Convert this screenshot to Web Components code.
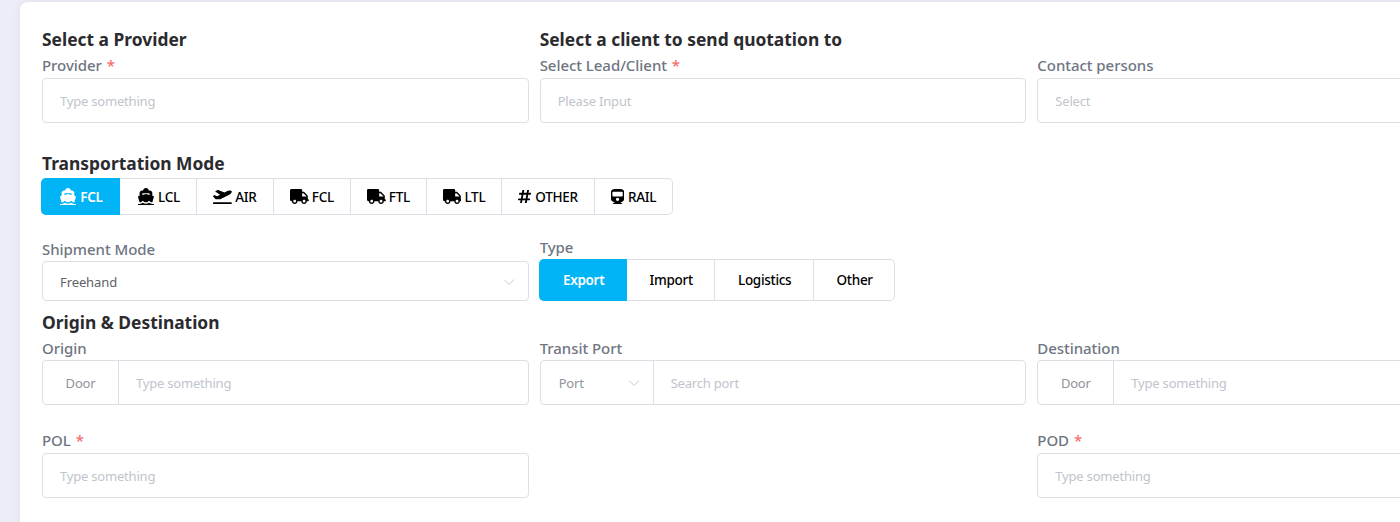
<!DOCTYPE html>
<html lang="en">
<head>
<meta charset="utf-8">
<title>Quotation</title>
<style>
  html, body { margin: 0; height: 522px; overflow: hidden; background: #ecedf6; }
  body { font-family: "Noto Sans", "Open Sans", sans-serif; }
</style>
</head>
<body>
<quote-card>
  <form-row>
    <form-section title="Select a Provider">
      <form-field label="Provider" required><text-box placeholder="Type something"></text-box></form-field>
    </form-section>
    <form-section title="Select a client to send quotation to">
      <form-field label="Select Lead/Client" required><text-box placeholder="Please Input"></text-box></form-field>
    </form-section>
    <form-section title="&nbsp;">
      <form-field label="Contact persons"><text-box placeholder="Select"></text-box></form-field>
    </form-section>
  </form-row>

  <form-section title="Transportation Mode" class="modes">
    <seg-group>
      <seg-button active width="79"><mode-icon name="ship"></mode-icon>FCL</seg-button>
      <seg-button width="77"><mode-icon name="ship"></mode-icon>LCL</seg-button>
      <seg-button width="77"><mode-icon name="plane"></mode-icon>AIR</seg-button>
      <seg-button width="77"><mode-icon name="truck"></mode-icon>FCL</seg-button>
      <seg-button width="76"><mode-icon name="truck"></mode-icon>FTL</seg-button>
      <seg-button width="75"><mode-icon name="truck"></mode-icon>LTL</seg-button>
      <seg-button width="93"><mode-icon name="hash"></mode-icon>OTHER</seg-button>
      <seg-button width="77"><mode-icon name="train"></mode-icon>RAIL</seg-button>
    </seg-group>
  </form-section>

  <form-row class="ship-row">
    <form-field label="Shipment Mode"><select-box value="Freehand"></select-box></form-field>
    <form-field label="Type">
      <seg-group tall>
        <seg-button active width="88">Export</seg-button>
        <seg-button width="88">Import</seg-button>
        <seg-button width="99">Logistics</seg-button>
        <seg-button width="80">Other</seg-button>
      </seg-group>
    </form-field>
  </form-row>

  <form-section title="Origin &amp; Destination" class="route">
    <form-row>
      <form-field label="Origin"><addon-box addon="Door" placeholder="Type something"></addon-box></form-field>
      <form-field label="Transit Port"><addon-box addon="Port" select placeholder="Search port"></addon-box></form-field>
      <form-field label="Destination"><addon-box addon="Door" placeholder="Type something"></addon-box></form-field>
    </form-row>
    <form-row class="ports">
      <form-field label="POL" required><text-box placeholder="Type something"></text-box></form-field>
      <div></div>
      <form-field label="POD" required><text-box placeholder="Type something"></text-box></form-field>
    </form-row>
  </form-section>
</quote-card>

<script>
const chevron = `<svg width="12" height="12" viewBox="0 0 12 12" fill="none" stroke="#c5c8ce" stroke-width="1"><path d="M1 3.5l5 5 5-5"/></svg>`;

const ICONS = {
  ship: ['2 1 20 22', 'M7.5,7.5H16.5V9.9L12,8.4L7.5,9.9ZM3.94,19H4C5.6,19 7,18.12 8,17C9,18.12 10.4,19 12,19C13.6,19 15,18.12 16,17C17,18.12 18.4,19 20,19H20.05L21.95,12.31C22.03,12.06 22,11.78 21.89,11.54C21.76,11.3 21.55,11.12 21.29,11.04L20,10.62V7C20,5.2 18.5,4 17,4H15.5C15.5,2.2 14,1 12,1C10,1 8.5,2.2 8.5,4H7C5.5,4 4,5.2 4,7V10.62L2.71,11.04C2.45,11.12 2.24,11.3 2.11,11.54C2,11.78 1.97,12.06 2.05,12.31M20,21C18.61,21 17.22,20.53 16,19.67C13.56,21.38 10.44,21.38 8,19.67C6.78,20.53 5.39,21 4,21H2V23H4C5.37,23 6.74,22.65 8,22.01C10.5,23.3 13.5,23.3 16,22.01C17.26,22.65 18.62,23 20,23H22V21H20Z', 17.5],
  plane: ['0 0 640 512', 'M624 448H16c-8.84 0-16 7.16-16 16v32c0 8.84 7.16 16 16 16h608c8.84 0 16-7.16 16-16v-32c0-8.84-7.16-16-16-16zM80.55 341.27c6.28 6.84 15.1 10.72 24.33 10.71l130.54-.18a65.62 65.62 0 0 0 29.64-7.12l290.96-147.65c26.74-13.57 50.71-32.94 67.02-58.31 18.31-28.48 20.3-49.09 13.07-63.65-7.21-14.57-24.74-25.27-58.25-27.45-29.85-1.94-59.54 5.92-86.28 19.48l-98.51 49.99-218.7-82.06a17.799 17.799 0 0 0-18-1.11L90.62 67.29c-10.67 5.41-13.25 19.65-5.17 28.53l156.22 98.1-103.21 52.38-72.35-36.47a17.804 17.804 0 0 0-16.07.02L9.91 230.22c-10.44 5.3-13.19 19.12-5.57 28.08l76.21 82.97z', 15],
  truck: ['0 0 640 512', 'M624 352h-16V243.9c0-12.7-5.1-24.9-14.1-33.9L494 110.1c-9-9-21.2-14.1-33.9-14.1H416V48c0-26.5-21.5-48-48-48H48C21.5 0 0 21.5 0 48v320c0 26.5 21.5 48 48 48h16c0 53 43 96 96 96s96-43 96-96h128c0 53 43 96 96 96s96-43 96-96h48c8.8 0 16-7.2 16-16v-32c0-8.8-7.2-16-16-16zM160 464c-26.5 0-48-21.5-48-48s21.5-48 48-48 48 21.5 48 48-21.5 48-48 48zm320 0c-26.5 0-48-21.5-48-48s21.5-48 48-48 48 21.5 48 48-21.5 48-48 48zm80-208H416V144h44.1l99.9 99.9V256z', 15],
  hash: ['0 0 448 512', 'M440.667 182.109l7.143-40c1.313-7.355-4.342-14.109-11.813-14.109h-74.81l14.623-81.891C377.123 38.754 371.468 32 363.997 32h-40.632a12 12 0 0 0-11.813 9.891L296.175 128H197.54l14.623-81.891C213.477 38.754 207.822 32 200.35 32h-40.632a12 12 0 0 0-11.813 9.891L132.528 128H53.432a12 12 0 0 0-11.813 9.891l-7.143 40C33.163 185.246 38.818 192 46.289 192h74.81L98.242 320H19.146a12 12 0 0 0-11.813 9.891l-7.143 40C-1.123 377.246 4.532 384 12.003 384h74.81L72.19 465.891C70.877 473.246 76.532 480 84.003 480h40.632a12 12 0 0 0 11.813-9.891L151.826 384h98.634l-14.623 81.891C234.523 473.246 240.178 480 247.65 480h40.632a12 12 0 0 0 11.813-9.891L315.472 384h79.096a12 12 0 0 0 11.813-9.891l7.143-40c1.313-7.355-4.342-14.109-11.813-14.109h-74.81l22.857-128h79.096a12 12 0 0 0 11.813-9.891zM261.889 320h-98.634l22.857-128h98.634l-22.857 128z', 15],
  train: ['0 0 448 512', 'M448 96v256c0 51.815-61.624 96-130.022 96l62.98 49.721C386.905 502.417 383.562 512 376 512H72c-7.578 0-10.892-9.594-4.957-14.279L130.022 448C61.82 448 0 403.954 0 352V96C0 42.981 64 0 128 0h192c65 0 128 42.981 128 96zm-48 136V120c0-13.255-10.745-24-24-24H72c-13.255 0-24 10.745-24 24v112c0 13.255 10.745 24 24 24h304c13.255 0 24-10.745 24-24zm-176 64c-30.928 0-56 25.072-56 56s25.072 56 56 56 56-25.072 56-56-25.072-56-56-56z', 15]
};

class quoteCard extends HTMLElement {
  constructor() {
    super();
    this.attachShadow({ mode: 'open' });
    this.shadowRoot.innerHTML = `
      <style>
        :host {
          display: block;
          box-sizing: border-box;
          width: 1560px;
          height: 560px;
          margin: 2px 0 0 20px;
          padding: 26px 22px 0;
          background: #fff;
          border-radius: 8px;
          box-shadow: 0 0 8px rgba(120, 120, 160, .12);
        }
      </style>
      <slot></slot>
    `;
  }
}

class formRow extends HTMLElement {
  constructor() {
    super();
    this.attachShadow({ mode: 'open' });
    this.shadowRoot.innerHTML = `
      <style>
        :host {
          display: grid;
          grid-template-columns: repeat(3, 486.67px);
          column-gap: 11px;
        }
        :host(.ship-row) { margin-top: 21px; align-items: end; --label-gap: 1px; }
        :host(.ports) { margin-top: 24px; --label-gap: 2px; }
      </style>
      <slot></slot>
    `;
  }
}

class formSection extends HTMLElement {
  constructor() {
    super();
    this.attachShadow({ mode: 'open' });
    this.shadowRoot.innerHTML = `
      <style>
        :host { display: block; }
        :host(.modes) { margin-top: 29px; }
        :host(.route) { margin-top: 10px; --label-gap: 1px; }
        h3 {
          margin: 0 0 4px;
          font-size: 17.4px;
          line-height: 22px;
          font-weight: 700;
          color: #2b2b2f;
        }
      </style>
      <h3></h3>
      <slot></slot>
    `;
    this.shadowRoot.querySelector('h3').textContent = this.getAttribute('title');
  }
}

class formField extends HTMLElement {
  constructor() {
    super();
    this.attachShadow({ mode: 'open' });
    this.shadowRoot.innerHTML = `
      <style>
        :host { display: block; }
        label {
          display: block;
          font-size: 15px;
          line-height: 22px;
          margin-bottom: var(--label-gap, 2px);
          font-weight: 500;
          letter-spacing: -.05px;
          color: #6f7582;
        }
        b { margin-left: 1px; font-weight: 500; color: #f56c6c; }
      </style>
      <label><span></span></label>
      <slot></slot>
    `;
    this.shadowRoot.querySelector('span').textContent = this.getAttribute('label');
    if (this.hasAttribute('required')) {
      this.shadowRoot.querySelector('label').insertAdjacentHTML('beforeend', ' <b>*</b>');
    }
  }
}

class textBox extends HTMLElement {
  constructor() {
    super();
    this.attachShadow({ mode: 'open' });
    this.shadowRoot.innerHTML = `
      <style>
        :host {
          display: flex;
          align-items: center;
          box-sizing: border-box;
          height: 45px;
          padding: 0 17px;
          border: 1px solid #dcdfe6;
          border-radius: 4px;
          font-size: 13px;
          letter-spacing: -.2px;
          color: #c0c4cc;
        }
      </style>
      <span></span>
    `;
    this.shadowRoot.querySelector('span').textContent = this.getAttribute('placeholder');
  }
}

class selectBox extends HTMLElement {
  constructor() {
    super();
    this.attachShadow({ mode: 'open' });
    this.shadowRoot.innerHTML = `
      <style>
        :host {
          display: flex;
          align-items: center;
          justify-content: space-between;
          box-sizing: border-box;
          height: 40px;
          padding: 1px 13px 0 17px;
          border: 1px solid #dcdfe6;
          border-radius: 4px;
          font-size: 13px;
          letter-spacing: -.1px;
          color: #606266;
        }
        svg { display: block; }
      </style>
      <span></span>${chevron}
    `;
    this.shadowRoot.querySelector('span').textContent = this.getAttribute('value');
  }
}

class addonBox extends HTMLElement {
  constructor() {
    super();
    this.attachShadow({ mode: 'open' });
    const isSelect = this.hasAttribute('select');
    this.shadowRoot.innerHTML = `
      <style>
        :host {
          display: flex;
          box-sizing: border-box;
          height: 45px;
          border: 1px solid #dcdfe6;
          border-radius: 4px;
          font-size: 13px;
          letter-spacing: -.2px;
        }
        .addon {
          display: flex;
          align-items: center;
          justify-content: center;
          box-sizing: border-box;
          width: 76px;
          border-right: 1px solid #dcdfe6;
          color: #909399;
        }
        .addon.sel {
          width: 113px;
          padding: 0 13px 0 18px;
          justify-content: space-between;
        }
        .field {
          display: flex;
          align-items: center;
          padding-left: 17px;
          color: #c0c4cc;
        }
        svg { display: block; }
      </style>
      <div class="addon ${isSelect ? 'sel' : ''}"><span></span>${isSelect ? chevron : ''}</div>
      <div class="field"></div>
    `;
    this.shadowRoot.querySelector('.addon span').textContent = this.getAttribute('addon');
    this.shadowRoot.querySelector('.field').textContent = this.getAttribute('placeholder');
  }
}

class segGroup extends HTMLElement {
  constructor() {
    super();
    this.attachShadow({ mode: 'open' });
    this.shadowRoot.innerHTML = `
      <style>
        :host {
          display: inline-flex;
          box-sizing: border-box;
          height: 37px;
          margin-left: -1px;
          border: 1px solid #dcdfe6;
          border-left: 0;
          border-radius: 5px;
          vertical-align: top;
        }
        :host([tall]) { height: 42px; }
        :host([tall]) ::slotted(seg-button) { padding-left: 2px; }
        ::slotted(seg-button:first-child) { border-radius: 5px 0 0 5px; margin: -1px 0; }
        ::slotted(seg-button:last-child) { border-right: 0; }
      </style>
      <slot></slot>
    `;
  }
}

class segButton extends HTMLElement {
  constructor() {
    super();
    this.attachShadow({ mode: 'open' });
    this.shadowRoot.innerHTML = `
      <style>
        :host {
          display: flex;
          align-items: center;
          justify-content: center;
          gap: 4px;
          box-sizing: border-box;
          border-right: 1px solid #dcdfe6;
          font-size: 13.5px;
          font-weight: 500;
          letter-spacing: -.3px;
          color: #000;
        }
        :host([active]) { background: #00b4f5; color: #fff; border-right: 0; font-weight: 600; }
      </style>
      <slot></slot>
    `;
    this.style.width = this.getAttribute('width') + 'px';
  }
}

class modeIcon extends HTMLElement {
  constructor() {
    super();
    this.attachShadow({ mode: 'open' });
    const name = this.getAttribute('name');
    const [box, d, size] = ICONS[name];
    this.shadowRoot.innerHTML = `
      <style>
        :host { display: block; line-height: 0; }
        :host([name="ship"]) { margin-left: 2px; }
        :host([name="plane"]), :host([name="truck"]) { margin-right: -1px; }
        svg { height: ${size}px; width: auto; fill: currentColor; }
      </style>
      <svg viewBox="${box}"><path d="${d}"/></svg>
    `;
  }
}

customElements.define('quote-card', quoteCard);
customElements.define('form-row', formRow);
customElements.define('form-section', formSection);
customElements.define('form-field', formField);
customElements.define('text-box', textBox);
customElements.define('select-box', selectBox);
customElements.define('addon-box', addonBox);
customElements.define('seg-group', segGroup);
customElements.define('seg-button', segButton);
customElements.define('mode-icon', modeIcon);
</script>
</body>
</html>
